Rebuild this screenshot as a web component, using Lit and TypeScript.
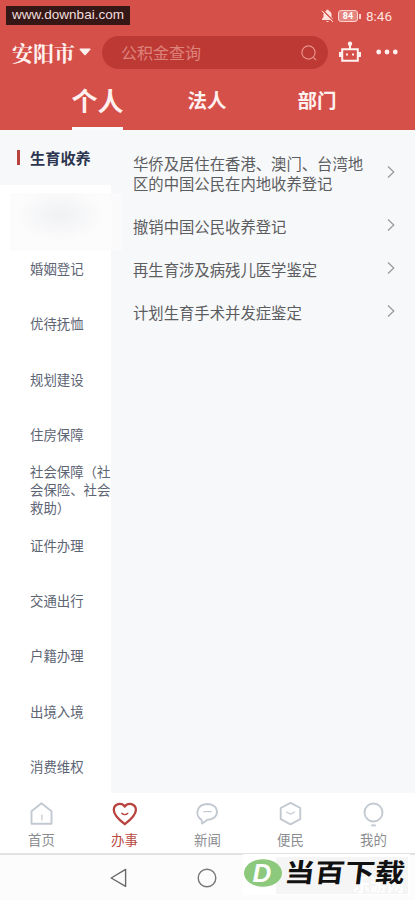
import { LitElement, html, css, svg } from "lit";
import { customElement } from "lit/decorators.js";
import { classMap } from "lit/directives/class-map.js";

const categories = [
  "生育收养", "", "婚姻登记", "优待抚恤", "规划建设", "住房保障",
  "社会保障（社会保险、社会救助）", "证件办理", "交通出行", "户籍办理", "出境入境", "消费维权",
];

const services = [
  "华侨及居住在香港、澳门、台湾地区的中国公民在内地收养登记",
  "撤销中国公民收养登记",
  "再生育涉及病残儿医学鉴定",
  "计划生育手术并发症鉴定",
];

const tabs = [
  { label: "首页", icon: svg`<path d="M3.5 10.2 13.5 2.2 23.5 10.2V22.8H3.5Z"/><path class="thin" d="M13.9 13.5V19.5"/>` },
  { label: "办事", icon: svg`<path d="M13.8 23.2C8 18.8 2.8 14.3 2.8 9 2.8 2.6 10.7 1 13.8 5.6 16.9 1 24.9 2.6 24.9 9 24.9 14.3 19.5 18.8 13.8 23.2Z"/><path class="thin" d="M10.4 12Q13.8 15.4 17.2 12"/>` },
  { label: "新闻", icon: svg`<path d="M7.4 18.6C.6 14.8 2.2 3.2 13.5 3 26.3 3.2 26.3 18.4 13.5 18.8L8.2 22.6 7.4 18.6Z"/><path class="thin" d="M9.3 10.6H17.7"/>` },
  { label: "便民", icon: svg`<path d="M13.5 1.8 23.3 7V18.2L13.5 23.4 3.7 18.2V7Z"/><path class="thin" d="M9.1 10.8 13.5 13.2 17.9 10.8"/>` },
  { label: "我的", icon: svg`<circle cx="13.5" cy="11.5" r="9"/><path d="M11.2 24.4H15.8"/>` },
];

@customElement("app-root")
export class AppRoot extends LitElement {
  static styles = css`
    :host {
      display: flex;
      flex-direction: column;
      position: relative;
      width: 415px;
      height: 900px;
      overflow: hidden;
      background: #fff;
      font-family: "Noto Sans CJK SC", sans-serif;
    }
    * { box-sizing: border-box; }
    svg { display: block; fill: none; flex: none; }
    .header { height: 130px; flex: none; background: #d6504a; color: #fff1ef; }
    .status {
      height: 34px;
      padding: 0 23px 2px 0;
      display: flex;
      align-items: center;
      justify-content: flex-end;
      font: 13.5px/20px Roboto, sans-serif;
      color: #ffe1de;
    }
    .bell { margin-right: 4px; }
    .battery {
      width: 20px; height: 12px;
      border: 1px solid #ffd0cc;
      border-radius: 3px;
      background: #e38680;
      font: bold 9px/10px Roboto, sans-serif;
      text-align: center;
      color: #fff;
    }
    .cap { width: 1.5px; height: 5px; background: #ffd0cc; margin: 0 5px 0 1.5px; }
    .bar { display: flex; align-items: center; height: 37px; padding-left: 12px; }
    .city {
      width: 64px;
      height: 34px;
      font: 700 21px/32px "Noto Serif CJK SC", "Noto Sans CJK SC", serif;
      white-space: nowrap;
    }
    .caret { margin: 0 11px 2px 3px; }
    .search {
      width: 226px; height: 33px;
      border-radius: 17px;
      background: #bd3a34;
      color: #de827c;
      display: flex;
      align-items: center;
      justify-content: space-between;
      padding: 0 10px 0 19px;
      font-size: 16px;
    }
    .search span { padding-bottom: 1px; }
    .robot { margin: 0 15px 1px 11px; }
    .dots { margin-bottom: 1px; }
    .scopes { height: 59px; display: flex; font-weight: 700; white-space: nowrap; }
    .scope {
      display: flex;
      align-items: center;
      justify-content: center;
      height: 59px;
      font-size: 19.5px;
      border-bottom: 3px solid transparent;
    }
    .personal { margin-left: 72px; width: 51px; font-size: 26px; border-color: #f9fafc; }
    .legal { margin-left: 64px; width: 40px; }
    .dept { margin-left: 70px; width: 40px; }
    .body { height: 663px; flex: none; display: flex; background: #f7f8fa; }
    .side { width: 111px; background: #fff; flex: none; }
    .cat {
      height: 55.35px;
      display: flex;
      align-items: center;
      padding: 0 0 .8px 30px;
      font-size: 13.4px;
      line-height: 18px;
      color: #5d6474;
      position: relative;
    }
    .cat.on { background: #f7f8fa; color: #2d3650; font-weight: 700; font-size: 15.2px; padding: 0 0 1px 16.5px; }
    .mark { width: 3.5px; height: 15px; background: #b8423c; margin-right: 10px; }
    .smudge {
      position: absolute;
      left: 10px; top: 8px;
      width: 112px; height: 58px;
      background: radial-gradient(ellipse 44px 26px at 50px 22px, #f0f1f3, rgba(251, 251, 252, .8));
    }
    .list { flex: 1; padding: 11.5px 19px 0 22px; }
    .service {
      display: flex;
      align-items: center;
      justify-content: space-between;
      padding: 11.2px 0;
      font-size: 15.35px;
      line-height: 20.5px;
      color: #5c5d60;
    }
    .name { width: 232px; }
    .arrow { margin-top: -2px; }
    .tabs { height: 62px; flex: none; display: flex; border-bottom: 2px solid #e1e2e4; }
    .tab {
      width: 83px;
      display: flex;
      flex-direction: column;
      align-items: center;
      padding-top: 8px;
      font-size: 13.4px;
      line-height: 20px;
      color: #8b8d91;
    }
    .tab svg { stroke: #c3c9d1; stroke-width: 1.9; margin-bottom: 2px; stroke-linejoin: round; }
    .tab .thin { stroke-width: 1.2; }
    .tab.on { color: #b94741; }
    .tab.on svg { stroke: #b8423e; stroke-width: 2.3; }
    .system { flex: 1; background: #fcfcfc; display: flex; align-items: center; padding-left: 109px; gap: 68px; }
    .source {
      position: absolute;
      left: 6px; top: 6px;
      width: 124px; height: 19px;
      background: #351816;
      color: #f0dfdd;
      font: 13.5px/17px "Liberation Sans", sans-serif;
      text-align: center;
      white-space: nowrap;
    }
    .brand {
      position: absolute;
      left: 243px; top: 854px;
      width: 167px; height: 41px;
      background: #fff;
    }
    .ghost {
      position: absolute;
      left: 33px; top: 3px;
      width: 132px; height: 37px;
      background: #f5f5f6;
      color: #fff;
      font: 700 17px/18px "Noto Sans CJK SC", sans-serif;
      text-align: right;
      padding: 18px 4px 0 0;
    }
    .logo { position: absolute; left: 1px; top: 5px; }
    .d { fill: #fff; font: italic 700 26px "Liberation Sans", sans-serif; }
    .title {
      position: absolute;
      left: 42px; top: -1.5px;
      font: 700 30px/36px "Noto Sans CJK SC", sans-serif;
      color: #111;
      transform: skewX(-7deg) scaleY(.86);
      white-space: nowrap;
    }
  `;

  render() {
    return html`
      <div class="header">
        <div class="status">
          <svg class="bell" width="13" height="14" viewBox="0 0 13 14"><path fill="#ffe1de" d="M1 11V10L2.5 8V5.5C2.5 3.3 4 2 5.4 1.7V.8H7.6V1.7C9.2 2 10.5 3.3 10.5 5.5V8L12 10V11ZM5 12H8Q6.5 14.2 5 12Z"/><path stroke="#d6504a" stroke-width="1.4" d="M1.6 1 12.5 11.9"/><path stroke="#ffe1de" d="M.8 1.8 12 13"/></svg>
          <div class="battery">84</div><div class="cap"></div><span>8:46</span>
        </div>
        <div class="bar">
          <div class="city">安阳市</div>
          <svg class="caret" width="12" height="8" viewBox="0 0 12 8"><path fill="#fff1ef" d="M1 .5H11Q12 .8 11.3 1.7L6.7 7Q6 7.7 5.3 7L.7 1.7Q0 .8 1 .5Z"/></svg>
          <div class="search"><span>公积金查询</span>
            <svg width="18" height="18" viewBox="0 0 18 18" stroke="#e8918b" stroke-width="1.2"><circle cx="8.5" cy="8.5" r="6.6"/><path d="M13.2 13.2 16 16"/></svg>
          </div>
          <svg class="robot" width="22" height="22" viewBox="0 0 22 22"><circle cx="11" cy="2.8" r="2.2" fill="#fff1ef"/><path d="M11 3V8M3.2 8.3H18.8V19.8H3.2Z" stroke="#fff1ef" stroke-width="2"/><path fill="#fff1ef" d="M0 11H3V16H0ZM19 11H22V16H19ZM7 12.6H9V14.6H7ZM13 12.6H15V14.6H13Z"/></svg>
          <svg class="dots" width="22" height="6" viewBox="0 0 22 6"><g fill="#fff1ef"><circle cx="2.7" cy="3" r="2.4"/><circle cx="11" cy="3" r="2.4"/><circle cx="19.3" cy="3" r="2.4"/></g></svg>
        </div>
        <div class="scopes">
          <div class="scope personal">个人</div>
          <div class="scope legal">法人</div>
          <div class="scope dept">部门</div>
        </div>
      </div>
      <div class="body">
        <div class="side">
          ${categories.map((name, i) => html`<div class=${classMap({ cat: true, on: i === 0 })}>${i === 0 ? html`<span class="mark"></span>` : ""}${name || html`<div class="smudge"></div>`}</div>`)}
        </div>
        <div class="list">
          ${services.map((name) => html`<div class="service"><div class="name">${name}</div><svg class="arrow" width="10" height="14" viewBox="0 0 10 14"><path d="M2 1.5 7.8 7 2 12.5" stroke="#96989c" stroke-width="1.2"/></svg></div>`)}
        </div>
      </div>
      <div class="tabs">
        ${tabs.map((tab, i) => html`<div class=${classMap({ tab: true, on: i === 1 })}><svg width="28" height="26" viewBox="0 0 28 26">${tab.icon}</svg>${tab.label}</div>`)}
      </div>
      <div class="system">
        <svg width="20" height="20" viewBox="0 0 20 20" stroke="#696969" stroke-width="1.4"><path stroke-linejoin="round" d="M2.2 10 16.6 1.4V18.4Z"/></svg>
        <svg width="20" height="20" viewBox="0 0 20 20" stroke="#777" stroke-width="1.4"><circle cx="10" cy="10" r="8.8"/></svg>
      </div>
      <div class="source">www.downbai.com</div>
      <div class="brand">
        <div class="ghost">乐游网</div>
        <svg class="logo" width="38" height="28" viewBox="0 0 38 28"><ellipse cx="19" cy="14" rx="19" ry="13.8" fill="#8cc97c"/><text class="d" x="8.5" y="23">D</text></svg>
        <div class="title">当百下载</div>
      </div>
    `;
  }
}
